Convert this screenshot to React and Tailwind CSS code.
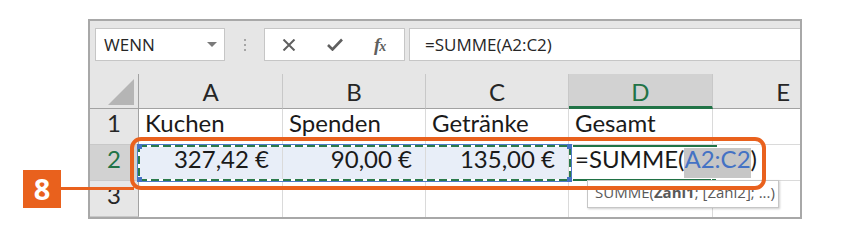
import React from 'react';

const cols = ['A', 'B', 'C', 'D', 'E'];
const widths = ['w-[144px]', 'w-[143px]', 'w-[143px]', 'w-[144px]', 'flex-1'];

const row1 = ['Kuchen', 'Spenden', 'Getränke', 'Gesamt', ''];
const row2 = ['327,42 €', '90,00 €', '135,00 €'];

function RowHead({ n, active }) {
  return (
    <div
      className={`w-[49px] h-[36px] shrink-0 flex items-end justify-center pb-[3px] border-r border-b border-r-[#a2a2a2] border-b-[#c8c8c8] ${
        active ? 'bg-[#d2d2d2] text-[#217346]' : 'bg-[#e6e6e6] text-[#262626]'
      }`}
    >
      {n}
    </div>
  );
}

function Toolbar() {
  return (
    <div className="h-[53px] flex items-start pt-[7px] pl-[5px] font-['Open_Sans',sans-serif]">
      <div className="w-[130px] h-[33px] bg-white border border-[#c6c6c6] flex items-center justify-between pl-[8px] pr-[7px] text-[17px] text-[#262626]">
        <span>WENN</span>
        <svg width="10" height="6" viewBox="0 0 10 6">
          <path d="M0 0 L10 0 L5 5 Z" fill="#7a7a7a" />
        </svg>
      </div>
      <div className="w-[39px] h-[33px] flex flex-col items-center justify-center gap-[3px]">
        <span className="w-[2px] h-[2px] bg-[#a5a5a5]" />
        <span className="w-[2px] h-[2px] bg-[#a5a5a5]" />
        <span className="w-[2px] h-[2px] bg-[#a5a5a5]" />
      </div>
      <div className="w-[141px] h-[33px] bg-white border border-[#c6c6c6] flex items-center pl-[17px] gap-[31px]">
        <svg width="14" height="12" viewBox="0 0 14 12">
          <path d="M1.5 0.5 L12.5 11.5 M12.5 0.5 L1.5 11.5" stroke="#5f5f5f" strokeWidth="2" fill="none" />
        </svg>
        <svg width="16" height="13" viewBox="0 0 16 13">
          <path d="M1 7 L5.5 11.5 L15 1.5" stroke="#5f5f5f" strokeWidth="2.6" fill="none" />
        </svg>
        <span className="font-['Liberation_Serif',serif] italic font-bold text-[19px] text-[#5f5f5f] leading-none tracking-[-1px]">
          f<span className="text-[14px]">x</span>
        </span>
      </div>
      <div className="flex-1 ml-[4px] h-[33px] bg-white border-y border-l border-[#c6c6c6] flex items-center pl-[15px] text-[17px] text-[#262626]">
        =SUMME(A2:C2)
      </div>
    </div>
  );
}

function HeaderRow() {
  return (
    <div className="flex h-[35px]">
      <div className="w-[49px] shrink-0 border-r border-b border-r-[#a2a2a2] border-b-[#a2a2a2] flex items-end justify-end pr-[4px] pb-[3px]">
        <svg width="26" height="26" viewBox="0 0 26 26">
          <path d="M26 0 L26 26 L0 26 Z" fill="#b5b5b5" />
        </svg>
      </div>
      {cols.map((c, i) => (
        <div
          key={c}
          className={`${widths[i]} shrink-0 flex items-center justify-center ${
            c === 'D'
              ? 'bg-[#d2d2d2] text-[#217346] border-b-[3px] border-b-[#217346] border-r border-r-[#c8c8c8] pt-[3px]'
              : 'border-b border-b-[#a2a2a2] border-r border-r-[#c8c8c8] text-[#262626] pt-[2px]'
          } ${i === 4 ? 'border-r-0 justify-end pr-[10px]' : ''}`}
        >
          {c}
        </div>
      ))}
    </div>
  );
}

export default function App() {
  return (
    <div className="relative w-[850px] h-[240px] bg-white overflow-hidden pt-[19px] pl-[88px] font-['Lato',sans-serif]">
      <div className="w-[714px] h-[200px] border-2 border-[#a8a8a8] bg-[#e6e6e6] text-[24px]">
        <Toolbar />
        <HeaderRow />

        <div className="flex bg-white">
          <RowHead n="1" />
          {row1.map((t, i) => (
            <div
              key={i}
              className={`${widths[i]} shrink-0 h-[36px] border-b border-r border-[#dadada] flex items-end pl-[6px] pb-[3px] text-[#1a1a1a] ${
                i === 4 ? 'border-r-0' : ''
              }`}
            >
              {t}
            </div>
          ))}
        </div>

        <div className="flex bg-white">
          <RowHead n="2" active />
          {row2.map((t, i) => (
            <div
              key={i}
              className={`${widths[i]} shrink-0 h-[36px] border-b border-r border-[#dadada] bg-[#e8eef8] flex items-end justify-end pr-[13px] pb-[3px] text-[#1a1a1a]`}
            >
              {t}
            </div>
          ))}
          <div className="w-[144px] shrink-0 h-[36px] border-b border-[#dadada] flex items-stretch pl-[6px] pt-[3px] pb-[2px] whitespace-nowrap text-[#1a1a1a] relative z-10">
            <span className="flex items-end pb-[1px]">=SUMME(</span>
            <span className="flex items-end pb-[1px] bg-[#c6c6c6] text-[#4472c4]">A2:C2</span>
            <span className="flex items-end pb-[1px]">)</span>
          </div>
          <div className="flex-1 h-[36px] border-b border-[#dadada]" />
        </div>

        <div className="flex bg-white">
          <RowHead n="3" />
          {cols.map((c, i) => (
            <div
              key={c}
              className={`${widths[i]} shrink-0 h-[36px] border-r border-[#dadada] ${i === 4 ? 'border-r-0' : ''}`}
            />
          ))}
        </div>
      </div>

      {/* range A2:C2 marching ants */}
      <svg className="absolute left-[137px] top-[144px] z-20" width="435" height="38" viewBox="0 0 435 38">
        <rect x="0.5" y="0.5" width="434" height="37" fill="none" stroke="#4f7bc8" strokeWidth="1" />
        <rect x="2" y="2" width="431" height="34" fill="none" stroke="#ffffff" strokeWidth="2" />
        <rect x="2" y="2" width="431" height="34" fill="none" stroke="#2a7a4b" strokeWidth="2" strokeDasharray="8 4" />
        <rect x="0" y="0" width="5" height="5" fill="#4472c4" />
        <rect x="430" y="0" width="5" height="5" fill="#4472c4" />
        <rect x="0" y="33" width="5" height="5" fill="#4472c4" />
        <rect x="430" y="33" width="5" height="5" fill="#4472c4" />
      </svg>

      {/* active cell D2 */}
      <div className="absolute left-[573px] top-[145px] w-[144px] h-[2px] bg-[#217346] z-20" />
      <div className="absolute left-[573px] top-[179px] w-[140px] h-[2px] bg-[#217346] z-20" />
      <div className="absolute left-[711px] top-[178px] w-[6px] h-[6px] bg-[#217346] border border-white z-20" />

      {/* tooltip */}
      <div className="absolute left-[587px] top-[180px] w-[192px] h-[28px] bg-white border border-[#c6c6c6] shadow-[1px_1px_2px_rgba(0,0,0,0.2)] flex items-center pl-[7px] pb-[3px] text-[15px] text-[#595959] font-['Open_Sans',sans-serif] z-20 whitespace-nowrap">
        SUMME(<b className="font-bold">Zahl1</b>; [Zahl2]; ...)
      </div>

      {/* callout */}
      <div className="absolute left-[130px] top-[137px] w-[636px] h-[53px] border-4 border-[#e9611d] rounded-[11px] z-30" />
      <div className="absolute left-[60px] top-[187px] w-[74px] h-[3px] bg-[#e9611d] z-30" />
      <div className="absolute left-[23px] top-[170px] w-[38px] h-[38px] bg-[#e9611d] flex items-center justify-center text-white font-bold text-[29px] font-['Open_Sans',sans-serif] z-30">
        8
      </div>
    </div>
  );
}
